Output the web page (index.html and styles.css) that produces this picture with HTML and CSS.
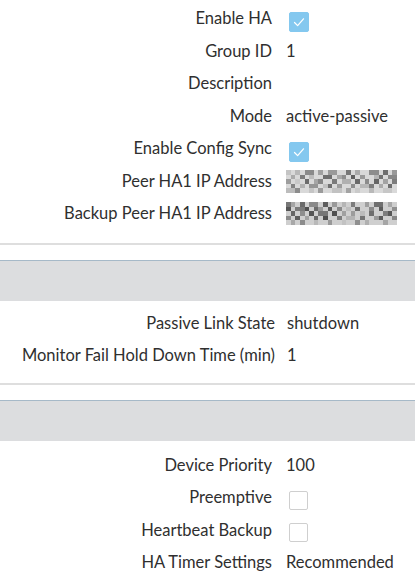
FILE: index.html
```html
<!DOCTYPE html>
<html>
<head>
<meta charset="utf-8">
<link rel="stylesheet" href="styles.css">
</head>
<body>
<div class="panel">
  <section class="section first">
    <div class="row"><span class="label">Enable HA</span><span class="value"><span class="cb checked"><svg viewBox="0 0 20 20" width="20" height="20"><path d="M5 10.5 L8.5 14 L15 6.5" fill="none" stroke="#fff" stroke-width="1.4" stroke-linecap="round" stroke-linejoin="round"/></svg></span></span></div>
    <div class="row"><span class="label">Group ID</span><span class="value">1</span></div>
    <div class="row"><span class="label">Description</span><span class="value"></span></div>
    <div class="row"><span class="label">Mode</span><span class="value">active-passive</span></div>
    <div class="row"><span class="label">Enable Config Sync</span><span class="value"><span class="cb checked"><svg viewBox="0 0 20 20" width="20" height="20"><path d="M5 10.5 L8.5 14 L15 6.5" fill="none" stroke="#fff" stroke-width="1.4" stroke-linecap="round" stroke-linejoin="round"/></svg></span></span></div>
    <div class="row"><span class="label">Peer HA1 IP Address</span><span class="value"><svg class="mosaic" viewBox="0 0 24 5" width="111" height="23" preserveAspectRatio="none" shape-rendering="crispEdges">
      <rect width="24" height="5" fill="#d9d9d9"/>
      <rect x="0" y="0" width="1" height="1" fill="#c4c4c4"/><rect x="2" y="0" width="1" height="1" fill="#b8b8b8"/><rect x="4" y="0" width="2" height="1" fill="#8a8a8a"/><rect x="7" y="0" width="1" height="1" fill="#a0a0a0"/><rect x="9" y="0" width="2" height="1" fill="#9a9a9a"/><rect x="13" y="0" width="1" height="1" fill="#777"/><rect x="15" y="0" width="1" height="1" fill="#aaa"/><rect x="18" y="0" width="2" height="1" fill="#8d8d8d"/><rect x="21" y="0" width="1" height="1" fill="#6e6e6e"/><rect x="23" y="0" width="1" height="1" fill="#999"/>
      <rect x="1" y="1" width="1" height="1" fill="#aaa"/><rect x="3" y="1" width="1" height="1" fill="#7d7d7d"/><rect x="5" y="1" width="1" height="1" fill="#bbb"/><rect x="8" y="1" width="2" height="1" fill="#6f6f6f"/><rect x="11" y="1" width="1" height="1" fill="#a8a8a8"/><rect x="12" y="1" width="1" height="1" fill="#8e8e8e"/><rect x="14" y="1" width="1" height="1" fill="#5f5f5f"/><rect x="16" y="1" width="1" height="1" fill="#999"/><rect x="19" y="1" width="1" height="1" fill="#b5b5b5"/><rect x="20" y="1" width="1" height="1" fill="#727272"/><rect x="22" y="1" width="2" height="1" fill="#888"/>
      <rect x="0" y="2" width="1" height="1" fill="#9d9d9d"/><rect x="2" y="2" width="1" height="1" fill="#c9c9c9"/><rect x="4" y="2" width="1" height="1" fill="#6b6b6b"/><rect x="6" y="2" width="1" height="1" fill="#a5a5a5"/><rect x="7" y="2" width="1" height="1" fill="#868686"/><rect x="10" y="2" width="1" height="1" fill="#7a7a7a"/><rect x="12" y="2" width="2" height="1" fill="#b0b0b0"/><rect x="15" y="2" width="1" height="1" fill="#6a6a6a"/><rect x="17" y="2" width="1" height="1" fill="#8b8b8b"/><rect x="19" y="2" width="1" height="1" fill="#666"/><rect x="21" y="2" width="1" height="1" fill="#a2a2a2"/><rect x="23" y="2" width="1" height="1" fill="#7c7c7c"/>
      <rect x="1" y="3" width="1" height="1" fill="#838383"/><rect x="3" y="3" width="1" height="1" fill="#b2b2b2"/><rect x="5" y="3" width="2" height="1" fill="#959595"/><rect x="8" y="3" width="1" height="1" fill="#c0c0c0"/><rect x="9" y="3" width="1" height="1" fill="#707070"/><rect x="11" y="3" width="1" height="1" fill="#9c9c9c"/><rect x="14" y="3" width="1" height="1" fill="#8f8f8f"/><rect x="16" y="3" width="2" height="1" fill="#b7b7b7"/><rect x="18" y="3" width="1" height="1" fill="#7e7e7e"/><rect x="20" y="3" width="1" height="1" fill="#a9a9a9"/><rect x="22" y="3" width="1" height="1" fill="#6d6d6d"/>
      <rect x="0" y="4" width="2" height="1" fill="#bcbcbc"/><rect x="2" y="4" width="1" height="1" fill="#8c8c8c"/><rect x="5" y="4" width="1" height="1" fill="#c5c5c5"/><rect x="7" y="4" width="1" height="1" fill="#9b9b9b"/><rect x="10" y="4" width="2" height="1" fill="#c2c2c2"/><rect x="13" y="4" width="1" height="1" fill="#a3a3a3"/><rect x="15" y="4" width="1" height="1" fill="#cacaca"/><rect x="18" y="4" width="1" height="1" fill="#b9b9b9"/><rect x="21" y="4" width="2" height="1" fill="#c7c7c7"/>
    </svg></span></div>
    <div class="row"><span class="label">Backup Peer HA1 IP Address</span><span class="value"><svg class="mosaic" viewBox="0 0 24 5" width="111" height="23" preserveAspectRatio="none" shape-rendering="crispEdges">
      <rect width="24" height="5" fill="#cfcfcf"/>
      <rect x="0" y="0" width="1" height="1" fill="#777"/><rect x="1" y="0" width="1" height="1" fill="#a5a5a5"/><rect x="3" y="0" width="1" height="1" fill="#6a6a6a"/><rect x="5" y="0" width="2" height="1" fill="#8a8a8a"/><rect x="8" y="0" width="1" height="1" fill="#5e5e5e"/><rect x="10" y="0" width="1" height="1" fill="#999"/><rect x="12" y="0" width="1" height="1" fill="#b5b5b5"/><rect x="14" y="0" width="1" height="1" fill="#7c7c7c"/><rect x="17" y="0" width="1" height="1" fill="#9f9f9f"/><rect x="19" y="0" width="2" height="1" fill="#6f6f6f"/><rect x="22" y="0" width="1" height="1" fill="#a8a8a8"/>
      <rect x="0" y="1" width="1" height="1" fill="#555"/><rect x="2" y="1" width="2" height="1" fill="#7a7a7a"/><rect x="4" y="1" width="1" height="1" fill="#4f4f4f"/><rect x="6" y="1" width="1" height="1" fill="#6b6b6b"/><rect x="7" y="1" width="1" height="1" fill="#9a9a9a"/><rect x="9" y="1" width="1" height="1" fill="#5a5a5a"/><rect x="11" y="1" width="1" height="1" fill="#888"/><rect x="13" y="1" width="1" height="1" fill="#bdbdbd"/><rect x="15" y="1" width="1" height="1" fill="#6c6c6c"/><rect x="18" y="1" width="1" height="1" fill="#8a8a8a"/><rect x="20" y="1" width="1" height="1" fill="#5c5c5c"/><rect x="23" y="1" width="1" height="1" fill="#909090"/>
      <rect x="1" y="2" width="1" height="1" fill="#666"/><rect x="3" y="2" width="1" height="1" fill="#8e8e8e"/><rect x="5" y="2" width="1" height="1" fill="#555"/><rect x="7" y="2" width="2" height="1" fill="#777"/><rect x="10" y="2" width="1" height="1" fill="#505050"/><rect x="12" y="2" width="1" height="1" fill="#a0a0a0"/><rect x="14" y="2" width="1" height="1" fill="#9c9c9c"/><rect x="16" y="2" width="1" height="1" fill="#bbb"/><rect x="18" y="2" width="1" height="1" fill="#6e6e6e"/><rect x="21" y="2" width="1" height="1" fill="#7d7d7d"/><rect x="22" y="2" width="1" height="1" fill="#585858"/>
      <rect x="0" y="3" width="1" height="1" fill="#8b8b8b"/><rect x="2" y="3" width="1" height="1" fill="#5d5d5d"/><rect x="4" y="3" width="1" height="1" fill="#a2a2a2"/><rect x="6" y="3" width="1" height="1" fill="#6a6a6a"/><rect x="8" y="3" width="1" height="1" fill="#4e4e4e"/><rect x="11" y="3" width="1" height="1" fill="#7b7b7b"/><rect x="13" y="3" width="2" height="1" fill="#b4b4b4"/><rect x="16" y="3" width="1" height="1" fill="#737373"/><rect x="19" y="3" width="1" height="1" fill="#9a9a9a"/><rect x="20" y="3" width="1" height="1" fill="#5a5a5a"/><rect x="23" y="3" width="1" height="1" fill="#888"/>
      <rect x="1" y="4" width="1" height="1" fill="#a8a8a8"/><rect x="3" y="4" width="1" height="1" fill="#8c8c8c"/><rect x="6" y="4" width="1" height="1" fill="#b9b9b9"/><rect x="9" y="4" width="1" height="1" fill="#999"/><rect x="12" y="4" width="1" height="1" fill="#c2c2c2"/><rect x="15" y="4" width="1" height="1" fill="#8f8f8f"/><rect x="17" y="4" width="1" height="1" fill="#b0b0b0"/><rect x="21" y="4" width="1" height="1" fill="#a5a5a5"/>
    </svg></span></div>
  </section>
  <div class="band"></div>
  <section class="section second">
    <div class="row"><span class="label">Passive Link State</span><span class="value">shutdown</span></div>
    <div class="row"><span class="label">Monitor Fail Hold Down Time (min)</span><span class="value">1</span></div>
  </section>
  <div class="band"></div>
  <section class="section third">
    <div class="row"><span class="label">Device Priority</span><span class="value">100</span></div>
    <div class="row"><span class="label">Preemptive</span><span class="value"><span class="cb"></span></span></div>
    <div class="row"><span class="label">Heartbeat Backup</span><span class="value"><span class="cb"></span></span></div>
    <div class="row"><span class="label">HA Timer Settings</span><span class="value">Recommended</span></div>
  </section>
</div>
</body>
</html>
```

FILE: styles.css
```css
html, body {
  margin: 0;
  padding: 0;
  background: #fff;
}
body {
  font-family: Lato, "Liberation Sans", sans-serif;
  font-size: 16.5px;
  color: #2f2f2f;
  width: 415px;
  height: 586px;
  overflow: hidden;
}
.section {
  display: flex;
  flex-direction: column;
  border-bottom: 2px solid #dedede;
}
.section.first {
  padding: 2px 0 13px;
}
.section.second {
  padding: 6px 0 11px;
}
.section.third {
  padding: 8px 0 0;
  border-bottom: none;
}
.row {
  display: grid;
  grid-template-columns: 272px 1fr;
  column-gap: 14px;
  height: 32.5px;
  align-items: center;
}
.section.second .row {
  grid-template-columns: 275px 1fr;
  column-gap: 12px;
}
.label {
  text-align: right;
  white-space: nowrap;
}
.value {
  display: flex;
  align-items: center;
  white-space: nowrap;
}
.band {
  margin-top: 15px;
  height: 40px;
  background: #dcdddf;
  border-top: 1px solid #a6b9c8;
}
.cb {
  display: inline-block;
  width: 19px;
  height: 19px;
  box-sizing: border-box;
  border: 1px solid #cfcfcf;
  border-radius: 2px;
  margin-left: 3px;
  margin-top: 6px;
  background: #fff;
}
.cb.checked {
  width: 20px;
  height: 20px;
  margin-top: 7px;
  background: #84c8ef;
  border-color: #84c8ef;
}
.cb.checked svg {
  display: block;
  width: 18px;
  height: 18px;
}
.mosaic {
  display: block;
  margin-top: 1px;
}
```
